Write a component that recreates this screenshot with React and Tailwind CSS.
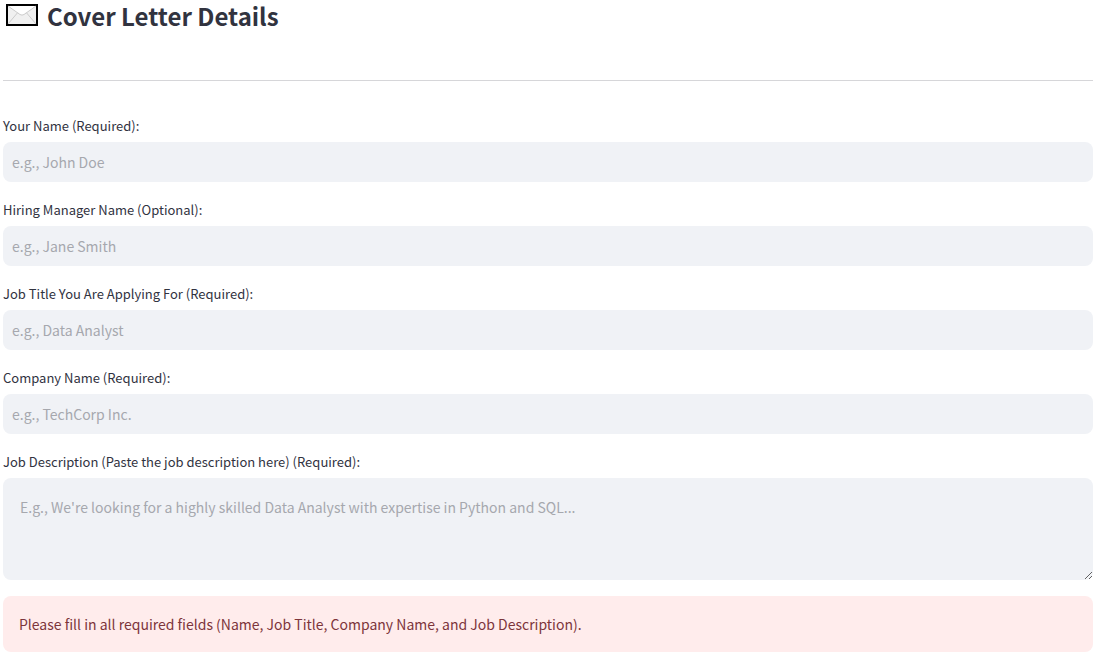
const fields = [
  { id: "name", label: "Your Name (Required):", placeholder: "e.g., John Doe" },
  { id: "manager", label: "Hiring Manager Name (Optional):", placeholder: "e.g., Jane Smith" },
  { id: "title", label: "Job Title You Are Applying For (Required):", placeholder: "e.g., Data Analyst" },
  { id: "company", label: "Company Name (Required):", placeholder: "e.g., TechCorp Inc." },
];

function Envelope() {
  return (
    <svg viewBox="0 0 32 22" className="mt-1 h-[22px] w-8 shrink-0" aria-hidden="true">
      <rect x="1" y="1" width="30" height="20" fill="#f0f0f0" stroke="#000" strokeWidth="2" />
      <path d="M2 2h28L18 10.5q-2 1.2-4 0z" fill="#fff" />
      <path d="M2 2l12 8.5q2 1.2 4 0L30 2M2 20l9.5-11.2M30 20l-9.5-11.2" fill="none" stroke="#cccccc" strokeWidth="1" />
    </svg>
  );
}

function Label({ htmlFor, children }) {
  return (
    <label htmlFor={htmlFor} className="mb-1 block text-[13px] leading-6 text-[#31333f]">
      {children}
    </label>
  );
}

export default function App() {
  return (
    <main className="bg-white pr-[5px] pb-3 pl-[3px] font-['Noto_Sans_CJK_SC',sans-serif] text-[#31333f]">
      <h2 className="flex items-start gap-[9px] pl-[3px] text-2xl leading-8 font-semibold">
        <Envelope />
        Cover Letter Details
      </h2>
      <hr className="mt-12 mb-[33px] border-t border-[#d6d6d9]" />
      <form className="flex flex-col gap-4">
        {fields.map((f) => (
          <div key={f.id}>
            <Label htmlFor={f.id}>{f.label}</Label>
            <input
              id={f.id}
              type="text"
              placeholder={f.placeholder}
              className="block h-10 w-full rounded-lg bg-[#f0f2f6] px-[9px] text-sm outline-none placeholder:text-[#a6a8ae]"
            />
          </div>
        ))}
        <div>
          <Label htmlFor="description">Job Description (Paste the job description here) (Required):</Label>
          <textarea
            id="description"
            placeholder="E.g., We're looking for a highly skilled Data Analyst with expertise in Python and SQL..."
            className="block h-[102px] w-full resize-y rounded-lg bg-[#f0f2f6] px-[17px] py-[17px] text-sm leading-6 outline-none placeholder:text-[#a6a8ae]"
          />
        </div>
        <div role="alert" className="rounded-lg bg-[#ffecec] p-4 text-sm leading-6 text-[#7d353b]">
          Please fill in all required fields (Name, Job Title, Company Name, and Job Description).
        </div>
      </form>
    </main>
  );
}
